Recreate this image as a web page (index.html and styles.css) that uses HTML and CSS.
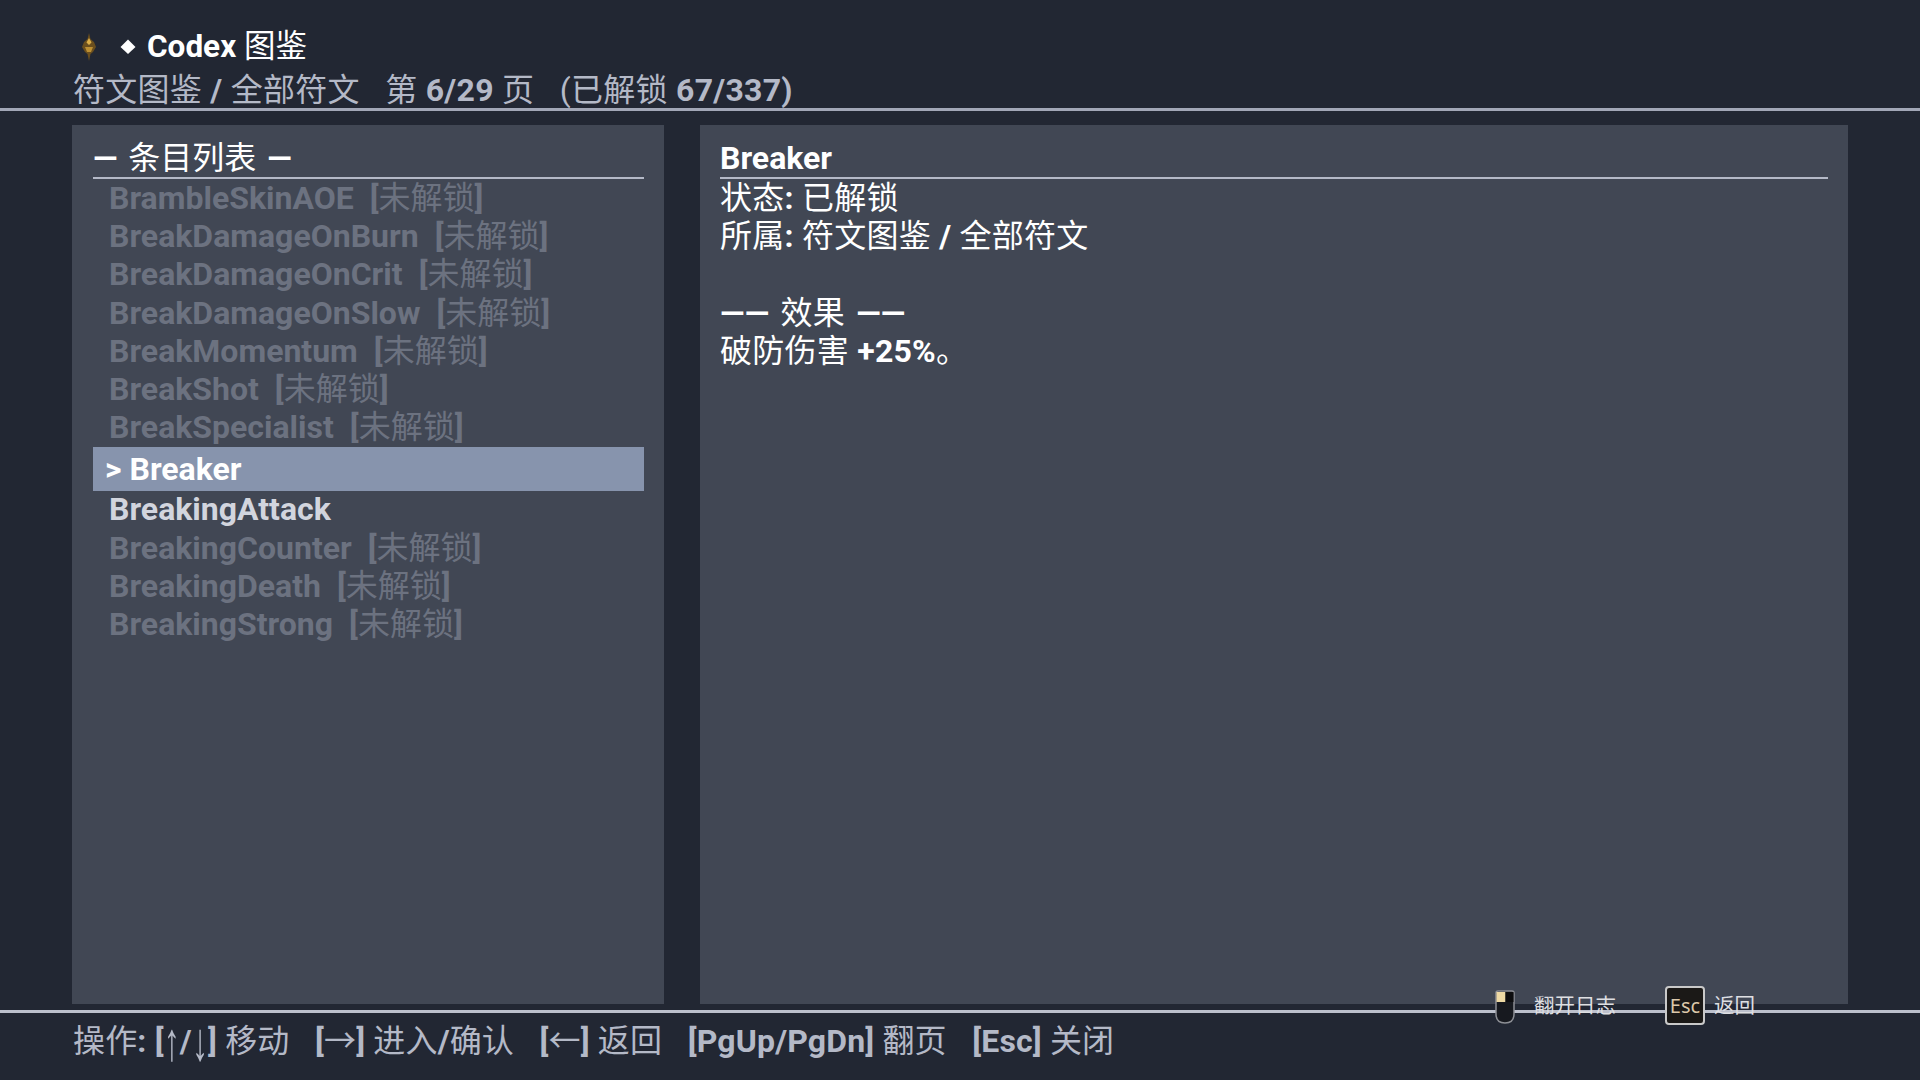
FILE: index.html
```html
<!DOCTYPE html>
<html lang="zh-CN">
<head>
<meta charset="utf-8">
<title>Codex 图鉴</title>
<link rel="stylesheet" href="styles.css">
</head>
<body>
<div class="screen">
  <header class="head">
    <div class="title-row">
      <svg class="emblem" viewBox="0 0 16 28" width="16" height="28" aria-hidden="true">
        <path class="em-a" d="M8 0 L9.500 6 L13 9 L15 14 L12 19 L9.500 21 L8 28 L6.500 21 L4 19 L1 14 L3 9 L6.500 6 Z"/>
        <path class="em-b" d="M8 5 L10.500 9.500 L8 12 L5.500 9.500 Z"/>
        <path class="em-c" d="M4 14 H12 L10 19 H6 Z"/>
      </svg>
      <svg class="diamond" viewBox="0 0 16 16" width="16" height="16" aria-hidden="true"><path d="M8 0.500 L15.500 8 L8 15 L0.500 8 Z"/></svg>
      <h1 class="title"><b>Codex</b> 图鉴</h1>
    </div>
    <div class="sub">符文图鉴 <b>/</b> 全部符文<span class="gap"></span>第 <b>6/29</b> 页<span class="gap"></span>(已解锁 <b>67/337)</b></div>
  </header>

  <main class="body">
    <section class="panel list">
      <div class="panel-head rule"><b>—</b> 条目列表 <b>—</b></div>
      <ul class="rows">
        <li class="row locked"><b>BrambleSkinAOE</b><i><b>[</b>未解锁<b>]</b></i></li>
        <li class="row locked"><b>BreakDamageOnBurn</b><i><b>[</b>未解锁<b>]</b></i></li>
        <li class="row locked"><b>BreakDamageOnCrit</b><i><b>[</b>未解锁<b>]</b></i></li>
        <li class="row locked"><b>BreakDamageOnSlow</b><i><b>[</b>未解锁<b>]</b></i></li>
        <li class="row locked"><b>BreakMomentum</b><i><b>[</b>未解锁<b>]</b></i></li>
        <li class="row locked"><b>BreakShot</b><i><b>[</b>未解锁<b>]</b></i></li>
        <li class="row locked"><b>BreakSpecialist</b><i><b>[</b>未解锁<b>]</b></i></li>
        <li class="row selected"><b>&gt; Breaker</b></li>
        <li class="row"><b>BreakingAttack</b></li>
        <li class="row locked"><b>BreakingCounter</b><i><b>[</b>未解锁<b>]</b></i></li>
        <li class="row locked"><b>BreakingDeath</b><i><b>[</b>未解锁<b>]</b></i></li>
        <li class="row locked"><b>BreakingStrong</b><i><b>[</b>未解锁<b>]</b></i></li>
      </ul>
    </section>
    <section class="panel detail">
      <div class="panel-head"><b>Breaker</b></div>
      <p class="line">状态<b>:</b> 已解锁</p>
      <p class="line">所属<b>:</b> 符文图鉴 <b>/</b> 全部符文</p>
      <p class="line"></p>
      <p class="line rule"><b>——</b> 效果 <b>——</b></p>
      <p class="line">破防伤害 <b>+25%</b>。</p>
    </section>
  </main>

  <footer class="foot">
    <div class="keys">操作<b>:</b> <b>[</b><span class="arrow">↑</span><b>/</b><span class="arrow">↓</span><b>]</b> 移动<span class="gap"></span><b>[</b>→<b>]</b> 进入<b>/</b>确认<span class="gap"></span><b>[</b>←<b>]</b> 返回<span class="gap"></span><b>[PgUp/PgDn]</b> 翻页<span class="gap"></span><b>[Esc]</b> 关闭</div>
  </footer>

  <div class="hints">
    <svg class="mouse" viewBox="0 0 20 34" width="20" height="34" aria-hidden="true">
      <path class="m-body" d="M1 3 Q1 1 3 1 H17 Q19 1 19 3 V24 Q19 33 10 33 Q1 33 1 24 Z"/>
      <rect class="m-left" x="1.500" y="2" width="9" height="10"/>
      <rect class="m-right" x="10.500" y="2" width="8" height="10"/>
    </svg>
    <span class="hint-text first">翻开日志</span>
    <span class="esc">Esc</span>
    <span class="hint-text">返回</span>
  </div>
</div>
</body>
</html>
```

FILE: styles.css
```css
* { box-sizing: border-box; }
html, body { margin: 0; padding: 0; }
body {
  width: 1920px;
  height: 1080px;
  overflow: hidden;
  background: #222733;
  font-family: Roboto, "Noto Sans CJK SC", sans-serif;
  font-size: 32px;
  color: #fff;
}
b { font-weight: 700; }
.screen {
  position: relative;
  width: 1920px;
  height: 1080px;
  display: flex;
  flex-direction: column;
}
.head {
  height: 111px;
  padding: 26px 73px 0;
  border-bottom: 3px solid #a2a7b7;
}
.title-row {
  display: flex;
  align-items: center;
  height: 42px;
}
.emblem { margin-left: 8px; flex: none; filter: blur(0.7px); }
.em-a { fill: #6a4e1e; }
.em-b { fill: #dcae48; }
.em-c { fill: #bd8f32; }
.diamond { margin-left: 23px; flex: none; fill: #fff; }
.title { margin: 0 0 0 11px; font-size: 31.500px; font-weight: 400; line-height: 42px; }
.sub { color: #b4b9c7; line-height: 44px; letter-spacing: 0.270px; }
.gap { display: inline-block; width: 25.500px; }
.body {
  flex: 1;
  display: flex;
  gap: 36px;
  padding: 14px 72px 6px 72px;
  min-height: 0;
}
.panel { background: #414754; padding: 14px 20px 0; }
.list { width: 592px; flex: none; padding-left: 21px; }
.detail { flex: 1; }
.panel-head {
  height: 40px;
  line-height: 38px;
  border-bottom: 2px solid #b4b9c7;
}
.rule { word-spacing: 3px; }
.rows { list-style: none; margin: 0; padding: 0; }
.row {
  height: 38.200px;
  line-height: 38px;
  padding-left: 16px;
  color: #d2d5de;
  white-space: nowrap;
}
.row i { font-style: normal; margin-left: 16px; }
.locked { color: #6c7280; }
.selected {
  height: 44px;
  line-height: 44px;
  margin-top: 1px;
  margin-bottom: -1px;
  background: #8794ad;
  color: #fff;
  padding-left: 12px;
}
.line { margin: 0; height: 38.200px; line-height: 38px; letter-spacing: 0.250px; }
.foot {
  height: 70px;
  padding: 6px 73px 0;
  border-top: 3px solid #bcc0cc;
  color: #b4b9c7;
  line-height: 44px;
  letter-spacing: 0.160px;
}
.arrow {
  display: inline-block;
  font-family: "Liberation Sans", sans-serif;
  transform: scaleY(1.7);
}
.hints {
  position: absolute;
  left: 1495px;
  top: 986px;
  display: flex;
  align-items: center;
  height: 39px;
}
.mouse { flex: none; margin-top: 3px; }
.m-body { fill: #17191f; stroke: #8d8f95; stroke-width: 1.500; }
.m-left { fill: #eed9a4; }
.m-right { fill: #0d0d0f; }
.hint-text { font-size: 20.500px; color: #dedfe2; line-height: 36px; }
.hint-text.first { margin-left: 19px; margin-right: 49px; }
.esc {
  flex: none;
  width: 40px;
  height: 39px;
  margin-right: 9px;
  background: #1b1917;
  border: 2px solid #c9c9c9;
  border-radius: 4px;
  color: #dcc8aa;
  font-family: "Noto Sans", sans-serif;
  font-size: 20px;
  line-height: 35px;
  text-align: center;
}
```
